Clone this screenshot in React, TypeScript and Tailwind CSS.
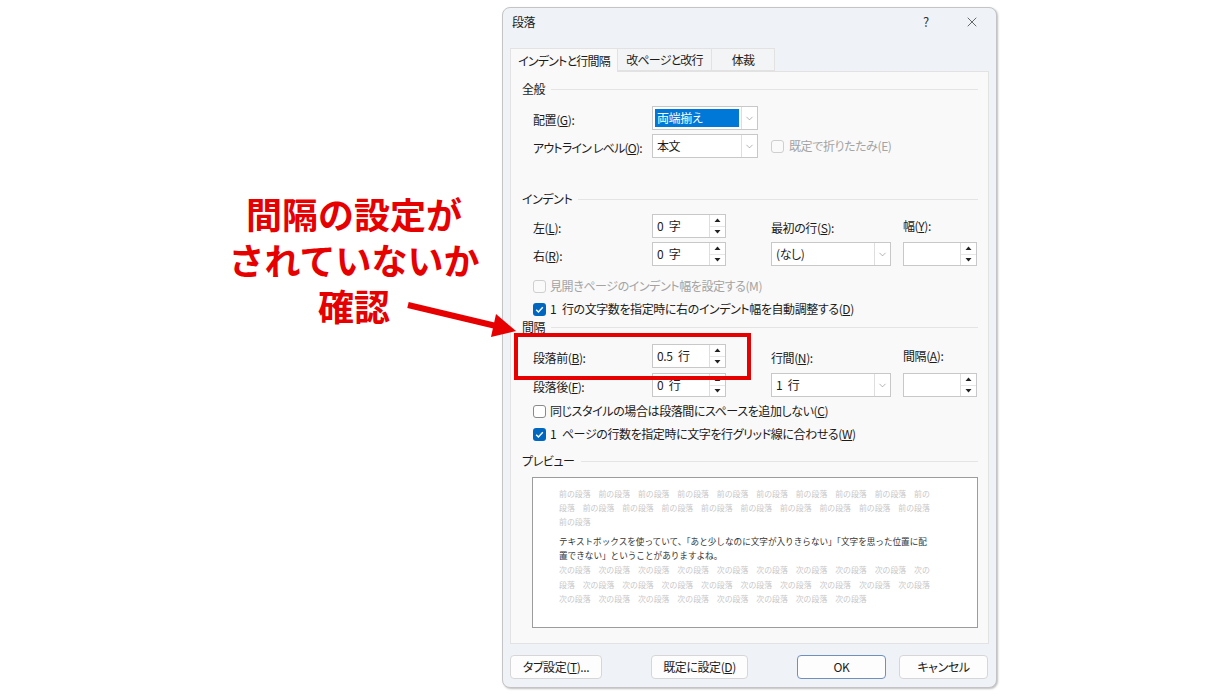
import React from "react";
import { X, ChevronDown } from "lucide-react";

const ui = "font-['Noto_Sans_CJK_JP',sans-serif] [font-feature-settings:'palt']";
// a wider gap between a number and its unit, as the Windows UI font draws it
const sp = "\u2002";

const Heading = ({ label }: { label: string }) => (
  <div className="flex items-center h-[18px] pl-[11px] pr-[10px]">
    <span className="text-[12px] text-[#1b1b1b] whitespace-nowrap">{label}</span>
    <div className="flex-1 h-px bg-[#e4e4e4] ml-[6px]" />
  </div>
);

const Check = ({ checked, disabled }: { checked?: boolean; disabled?: boolean }) =>
  checked ? (
    <div className="w-[13px] h-[13px] rounded-[3px] bg-[#0067c0] flex items-center justify-center flex-none">
      <svg width="13" height="13" viewBox="0 0 13 13">
        <path d="M3.2 6.8 L5.4 9 L9.8 4.2" fill="none" stroke="white" strokeWidth="1.4" />
      </svg>
    </div>
  ) : (
    <div
      className={`w-[13px] h-[13px] rounded-[3px] border flex-none ${
        disabled ? "border-[#cfcfcf] bg-[#fafafa]" : "border-[#8a8a8a] bg-white"
      }`}
    />
  );

const CheckRow = ({
  label,
  checked,
  disabled,
  mt,
}: {
  label: React.ReactNode;
  checked?: boolean;
  disabled?: boolean;
  mt: string;
}) => (
  <div className={`flex items-center h-[18px] pl-[22px] gap-[4px] ${mt}`}>
    <Check checked={checked} disabled={disabled} />
    <span className={`text-[12px] whitespace-nowrap ${disabled ? "text-[#a3a3a3]" : "text-[#1b1b1b]"}`}>{label}</span>
  </div>
);

const Select = ({ value, width, highlight }: { value: string; width: string; highlight?: boolean }) => (
  <div className={`flex h-[24px] border border-[#c8c8c8] bg-white ${width}`}>
    <div className="flex-1 p-[2px] flex">
      {highlight ? (
        <span className="flex-1 bg-[#0078d7] text-white text-[12px] leading-[18px] px-[2px] whitespace-nowrap">{value}</span>
      ) : (
        <span className="text-[12px] leading-[18px] px-[2px] text-[#1b1b1b] whitespace-nowrap">{value}</span>
      )}
    </div>
    <div className="w-[16px] border-l border-[#dedede] flex items-center justify-center">
      <ChevronDown size={11} strokeWidth={1.2} className="text-[#777]" />
    </div>
  </div>
);

const Spinner = ({ value }: { value?: string }) => (
  <div className="flex h-[24px] w-[74px] border border-[#c8c8c8] bg-white">
    <div className="flex-1 pl-[4px] text-[12px] leading-[22px] text-[#1b1b1b] whitespace-nowrap">{value}</div>
    <div className="w-[16px] border-l border-[#dedede] flex flex-col">
      <div className="flex-1 flex items-center justify-center border-b border-[#e6e6e6]">
        <svg width="7" height="4" viewBox="0 0 7 4">
          <path d="M0.5 4 L3.5 0.5 L6.5 4 Z" fill="#222" />
        </svg>
      </div>
      <div className="flex-1 flex items-center justify-center">
        <svg width="7" height="4" viewBox="0 0 7 4">
          <path d="M0.5 0 L3.5 3.5 L6.5 0 Z" fill="#222" />
        </svg>
      </div>
    </div>
  </div>
);

const Label = ({ children }: { children: React.ReactNode }) => (
  <span className="text-[12px] text-[#1b1b1b] whitespace-nowrap">{children}</span>
);

const Btn = ({ children, width, focus }: { children: React.ReactNode; width: string; focus?: boolean }) => (
  <div
    className={`h-[24px] ${width} rounded-[4px] bg-[#fdfdfd] border flex items-center justify-center text-[12px] text-[#1b1b1b] whitespace-nowrap ${
      focus ? "border-[#6f8fbf]" : "border-[#d6d6d6]"
    }`}
  >
    {children}
  </div>
);

const before = "前の段落";
const after = "次の段落";
// preview filler words are separated by an ideographic space, as Word draws them
const rep = (w: string, n: number) => Array(n).fill(w).join("\u3000");

const App: React.FC = () => {
  return (
    <div className={`relative w-[1218px] h-[698px] bg-white flex overflow-hidden ${ui}`}>
      {/* Callout text */}
      <div className="w-[502px] flex-none">
        <div className="ml-[204px] mt-[190px] w-[300px] text-center text-[36px] leading-[46px] font-bold text-[#e60000] font-['Noto_Sans_CJK_JP',sans-serif] [font-feature-settings:normal]">
          <div>間隔の設定が</div>
          <div>されていないか</div>
          <div>確認</div>
        </div>
      </div>

      {/* Paragraph dialog */}
      <div className="mt-[7px] w-[495px] h-[681px] rounded-[8px] border border-[#c4c4c4] bg-[#eff2f7] shadow-[1px_1px_2px_rgba(0,0,0,0.25)] flex flex-col tracking-[-0.4px]">
        <div className="h-[28px] flex items-center pl-[9px] pr-[1px]">
          <span className="text-[12px] text-[#1b1b1b] flex-1">段落</span>
          <span className="w-[46px] text-center text-[13px] text-[#333]">?</span>
          <span className="w-[46px] flex justify-center">
            <X size={16} strokeWidth={1.1} className="text-[#333]" />
          </span>
        </div>

        {/* Tabs */}
        <div className="mt-[12px] flex pl-[7px] h-[23px] tracking-[-0.8px]">
          <div className="relative z-10 w-[108px] h-[24px] border border-b-0 border-[#e2e2e2] bg-[#f9f9f9] flex items-center justify-center text-[12px] text-[#1b1b1b] whitespace-nowrap">
            インデントと行間隔
          </div>
          <div className="w-[94px] border border-l-0 border-[#e2e2e2] bg-[#f3f4f6] flex items-center justify-center text-[12px] text-[#1b1b1b] whitespace-nowrap">
            改ページと改行
          </div>
          <div className="w-[63px] border border-l-0 border-[#e2e2e2] bg-[#f3f4f6] flex items-center justify-center text-[12px] text-[#1b1b1b]">
            体裁
          </div>
        </div>

        <div className="mx-[7px] h-[573px] border border-[#e2e2e2] bg-[#f9f9f9] flex flex-col">
          <div className="mt-[8px]">
            <Heading label="全般" />
          </div>

          <div className="mt-[8px] flex items-center h-[24px] pl-[22px]">
            <div className="w-[119px]">
              <Label>
                配置(<u>G</u>):
              </Label>
            </div>
            <Select value="両端揃え" width="w-[106px]" highlight />
          </div>

          <div className="mt-[4px] flex items-center h-[24px] pl-[22px]">
            <div className="w-[119px] tracking-[-0.8px]">
              <Label>
                アウトライン レベル(<u>O</u>):
              </Label>
            </div>
            <div className="w-[119px]">
              <Select value="本文" width="w-[106px]" />
            </div>
            <div className="flex items-center gap-[5px]">
              <Check disabled />
              <span className="text-[12px] text-[#a3a3a3] whitespace-nowrap">既定で折りたたみ(E)</span>
            </div>
          </div>

          <div className="mt-[32px]">
            <Heading label="インデント" />
          </div>

          <div className="mt-[6px] flex items-center h-[24px] pl-[22px]">
            <div className="w-[119px]">
              <Label>
                左(<u>L</u>):
              </Label>
            </div>
            <div className="w-[119px]">
              <Spinner value={`0${sp}字`} />
            </div>
            <div className="w-[132px]">
              <Label>
                最初の行(<u>S</u>):
              </Label>
            </div>
            <Label>
              幅(<u>Y</u>):
            </Label>
          </div>

          <div className="mt-[4px] flex items-center h-[24px] pl-[22px]">
            <div className="w-[119px]">
              <Label>
                右(<u>R</u>):
              </Label>
            </div>
            <div className="w-[119px]">
              <Spinner value={`0${sp}字`} />
            </div>
            <div className="w-[132px]">
              <Select value="(なし)" width="w-[120px]" />
            </div>
            <Spinner />
          </div>

          <CheckRow mt="mt-[11px]" disabled label="見開きページのインデント幅を設定する(M)" />
          <CheckRow
            mt="mt-[5px]"
            checked
            label={
              <>
                1{sp}行の文字数を指定時に右のインデント幅を自動調整する(<u>D</u>)
              </>
            }
          />

          <div>
            <Heading label="間隔" />
          </div>

          <div className="mt-[8px] flex items-center h-[24px] pl-[22px]">
            <div className="w-[119px]">
              <Label>
                段落前(<u>B</u>):
              </Label>
            </div>
            <div className="w-[119px]">
              <Spinner value={`0.5${sp}行`} />
            </div>
            <div className="w-[132px]">
              <Label>
                行間(<u>N</u>):
              </Label>
            </div>
            <Label>
              間隔(<u>A</u>):
            </Label>
          </div>

          <div className="mt-[5px] flex items-center h-[24px] pl-[22px]">
            <div className="w-[119px]">
              <Label>
                段落後(<u>F</u>):
              </Label>
            </div>
            <div className="w-[119px]">
              <Spinner value={`0${sp}行`} />
            </div>
            <div className="w-[132px]">
              <Select value={`1${sp}行`} width="w-[120px]" />
            </div>
            <Spinner />
          </div>

          <CheckRow
            mt="mt-[5px]"
            label={
              <>
                同じスタイルの場合は段落間にスペースを追加しない(<u>C</u>)
              </>
            }
          />
          <CheckRow
            mt="mt-[5px]"
            checked
            label={
              <>
                1{sp}ページの行数を指定時に文字を行グリッド線に合わせる(<u>W</u>)
              </>
            }
          />

          <div className="mt-[9px]">
            <Heading label="プレビュー" />
          </div>

          {/* Preview page */}
          <div className="mt-[7px] ml-[21px] mr-[10px] h-[151px] bg-white border border-[#9c9c9c] pl-[26px] pt-[9px] font-['Noto_Sans_CJK_JP',sans-serif] [font-feature-settings:normal] tracking-normal whitespace-nowrap">
            <div className="text-[7.9px] leading-[14px] text-[#c8c8c8]">
              <div>{rep(before, 9)}{"\u3000"}前の</div>
              <div>段落{"\u3000"}{rep(before, 9)}</div>
              <div>{before}</div>
            </div>
            <div className="mt-[5px] text-[8.6px] leading-[14px] text-[#333]">
              <div>テキストボックスを使っていて、「あと少しなのに文字が入りきらない」「文字を思った位置に配</div>
              <div>置できない」ということがありますよね。</div>
            </div>
            <div className="mt-px text-[7.9px] leading-[14.5px] text-[#c8c8c8]">
              <div>{rep(after, 9)}{"\u3000"}次の</div>
              <div>段落{"\u3000"}{rep(after, 9)}</div>
              <div>{rep(after, 8)}</div>
            </div>
          </div>
        </div>

        {/* Buttons */}
        <div className="mt-[11px] flex pl-[7px]">
          <Btn width="w-[92px]">
            タブ設定(<u>T</u>)...
          </Btn>
          <div className="ml-[49px]">
            <Btn width="w-[97px]">
              既定に設定(<u>D</u>)
            </Btn>
          </div>
          <div className="ml-[49px]">
            <Btn width="w-[89px]" focus>
              OK
            </Btn>
          </div>
          <div className="ml-[13px]">
            <Btn width="w-[89px]">キャンセル</Btn>
          </div>
        </div>
      </div>

      {/* Callout arrow and highlight frame */}
      <svg className="absolute left-0 top-0 pointer-events-none" width="1218" height="698">
        <line x1="408" y1="305" x2="496" y2="326" stroke="#e60000" strokeWidth="6" />
        <polygon points="516,331 491,337 496,314" fill="#e60000" />
      </svg>
      <div className="absolute left-[514px] top-[333px] w-[237px] h-[47px] border-[4px] border-[#e60000] pointer-events-none" />
    </div>
  );
};

export default App;
